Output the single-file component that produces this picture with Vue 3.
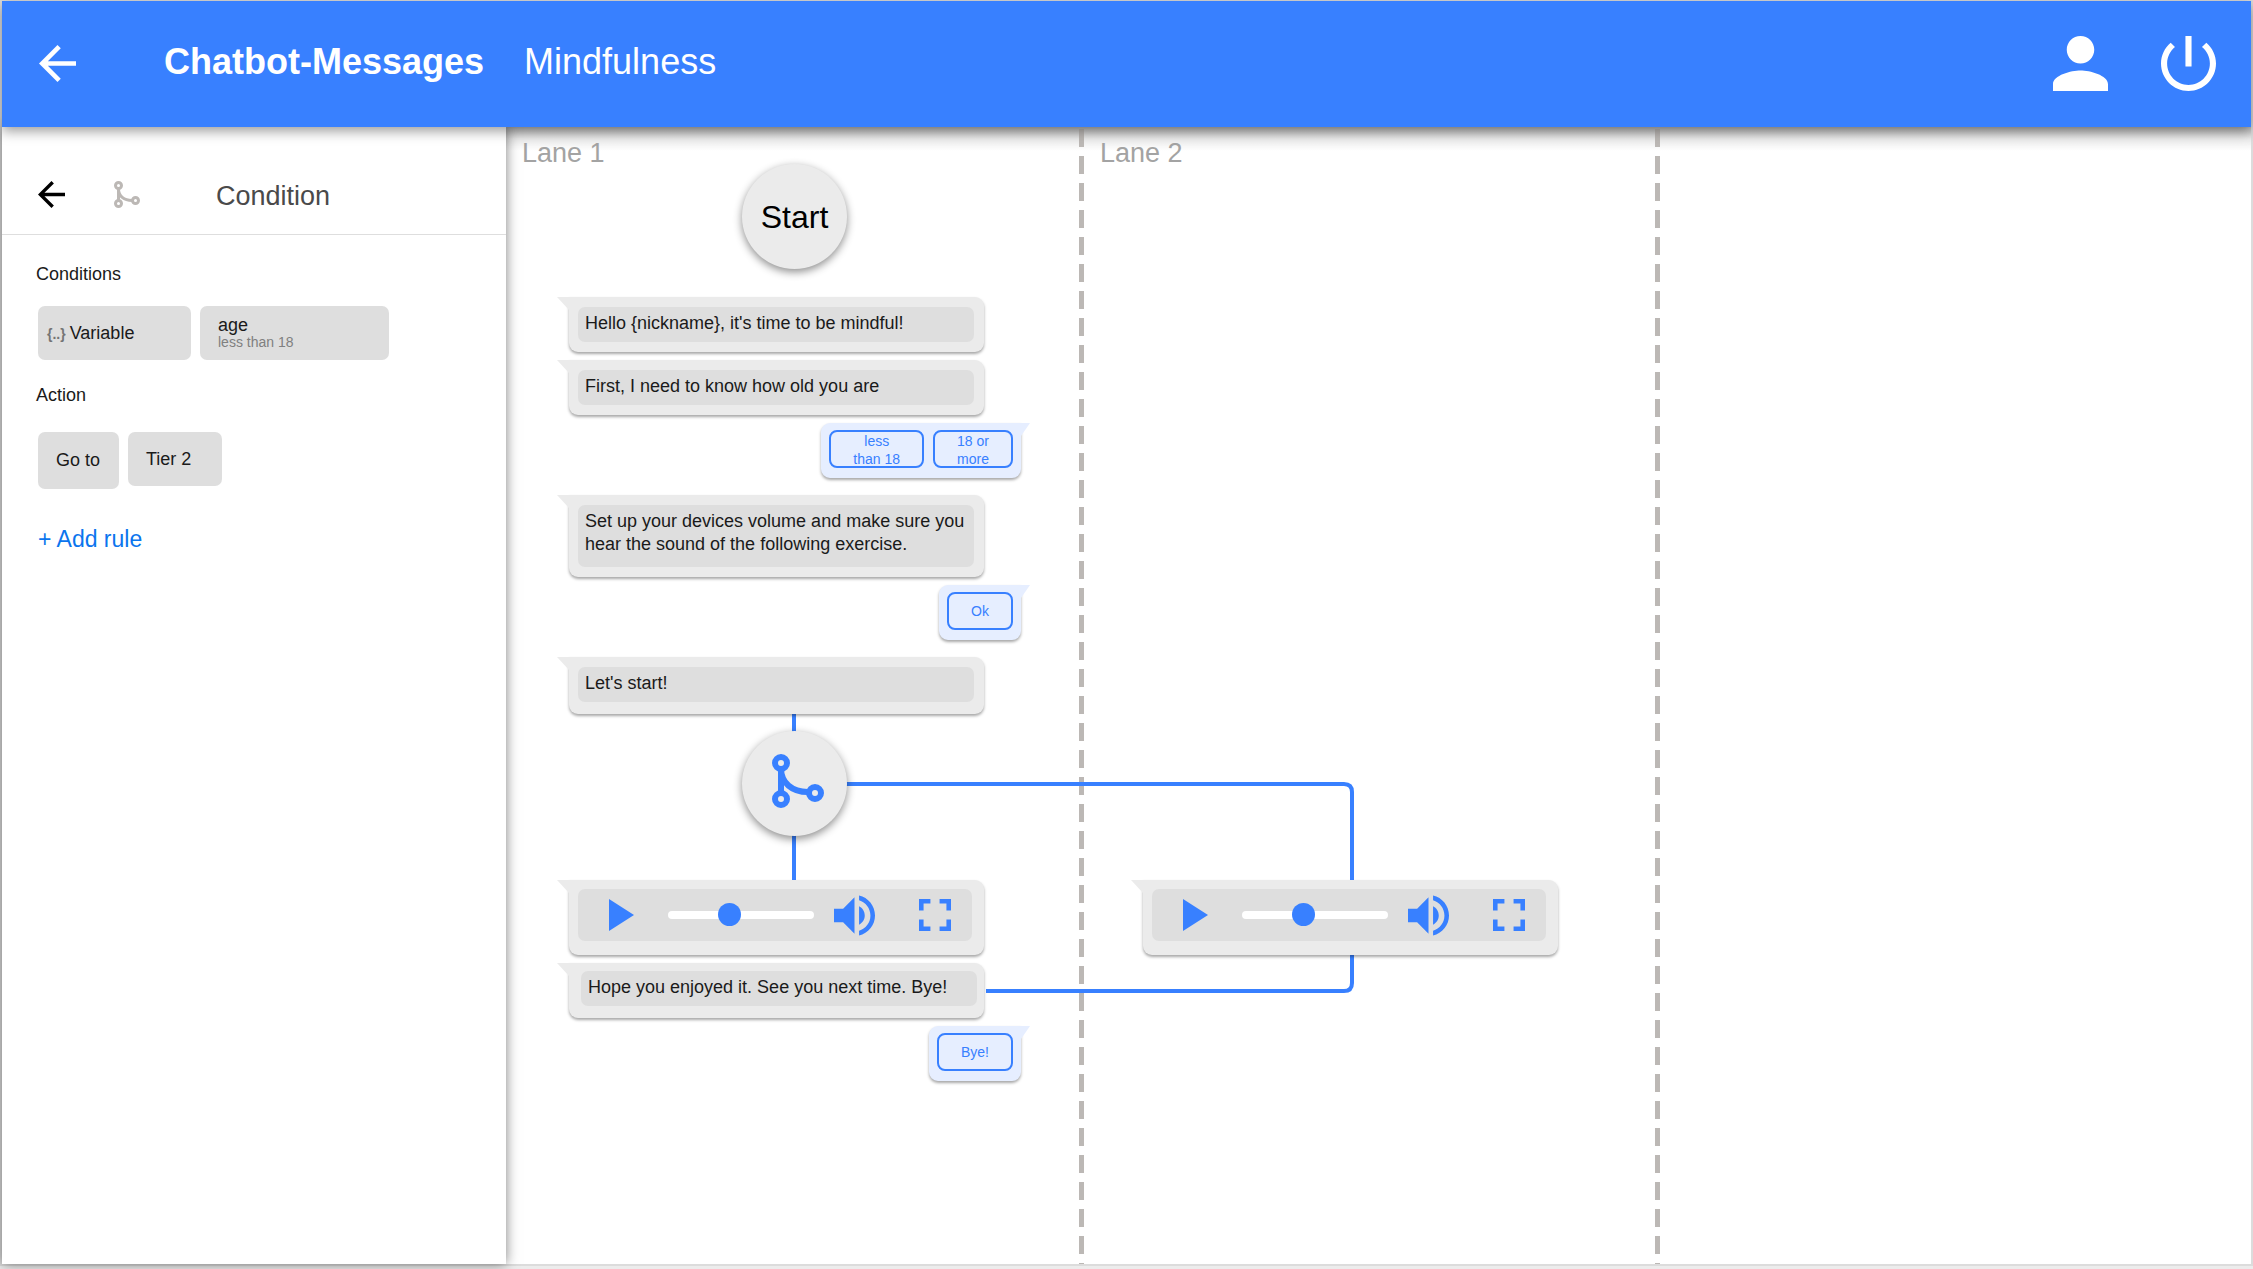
<script setup>
import { ref } from 'vue'

const blocks = [
  { kind: 'start' },
  {
    kind: 'turn',
    items: [
      { from: 'bot', text: "Hello {nickname}, it's time to be mindful!" },
      { from: 'bot', text: 'First, I need to know how old you are' },
      { from: 'user', options: ['less\nthan 18', '18 or\nmore'] },
    ],
  },
  {
    kind: 'turn',
    items: [
      {
        from: 'bot',
        tall: true,
        text: 'Set up your devices volume and make sure you hear the sound of the following exercise.',
      },
      { from: 'user', options: ['Ok'] },
    ],
  },
  { kind: 'turn', items: [{ from: 'bot', joined: true, text: "Let's start!" }] },
  { kind: 'condition' },
  {
    kind: 'turn',
    items: [
      { from: 'audio', id: 'seek-lane-1' },
      { from: 'bot', last: true, text: 'Hope you enjoyed it. See you next time. Bye!' },
      { from: 'user', options: ['Bye!'] },
    ],
  },
]

const secondLane = [
  { kind: 'turn', items: [{ from: 'audio', id: 'seek-lane-2' }] },
]

const lanes = [
  { title: 'Lane 1', cls: 'lane-first', blocks },
  { title: 'Lane 2', cls: 'lane-second', blocks: secondLane },
]

const positions = ref({ 'seek-lane-1': 41, 'seek-lane-2': 41 })
</script>

<template>
  <div class="page">
    <header class="topbar">
      <button class="icon-btn" type="button" aria-label="Back">
        <svg width="37" height="37" viewBox="4 4 16 16"><path fill="currentColor" d="M20 11H7.83l5.59-5.59L12 4l-8 8 8 8 1.41-1.41L7.83 13H20z" /></svg>
      </button>
      <h1 class="product">Chatbot-Messages</h1>
      <span class="project">Mindfulness</span>
      <nav class="actions">
        <button class="icon-btn" type="button" aria-label="Profile">
          <svg width="55" height="55" viewBox="4 4 16 16"><path fill="currentColor" d="M12 12c2.21 0 4-1.79 4-4s-1.79-4-4-4-4 1.79-4 4 1.79 4 4 4zm0 2c-2.67 0-8 1.34-8 4v2h16v-2c0-2.66-5.33-4-8-4z" /></svg>
        </button>
        <button class="icon-btn" type="button" aria-label="Log out">
          <svg width="55" height="55" viewBox="3 3 18 18"><path fill="currentColor" d="M13 3h-2v10h2V3zm4.83 2.17l-1.42 1.42C17.99 7.86 19 9.81 19 12c0 3.87-3.13 7-7 7s-7-3.13-7-7c0-2.19 1.01-4.14 2.58-5.42L6.17 5.17C4.23 6.82 3 9.26 3 12c0 4.97 4.03 9 9 9s9-4.03 9-9c0-2.74-1.23-5.18-3.17-6.83z" /></svg>
        </button>
      </nav>
    </header>

    <div class="workspace">
      <aside class="sidebar">
        <div class="sidebar-head">
          <button class="icon-btn dark" type="button" aria-label="Close condition">
            <svg width="27" height="27" viewBox="4 4 16 16"><path fill="currentColor" d="M20 11H7.83l5.59-5.59L12 4l-8 8 8 8 1.41-1.41L7.83 13H20z" /></svg>
          </button>
          <svg class="branch muted" width="26" height="27" viewBox="0 0 52 54">
            <path d="M9 14V40M9 16C9 30 20 39 36 39" />
            <circle cx="9" cy="9" r="6" /><circle cx="9" cy="45" r="6" /><circle cx="43" cy="39" r="6" />
          </svg>
          <h2>Condition</h2>
        </div>
        <div class="sidebar-body">
          <h3>Conditions</h3>
          <div class="chips">
            <button class="chip variable" type="button"><b>{..}</b>Variable</button>
            <button class="chip rule" type="button"><span>age</span><small>less than 18</small></button>
          </div>
          <h3>Action</h3>
          <div class="chips actions-row">
            <button class="chip goto" type="button">Go to</button>
            <button class="chip tier" type="button">Tier 2</button>
          </div>
          <button class="add" type="button">+ Add rule</button>
        </div>
      </aside>

      <main class="canvas">
        <svg class="wires" width="900" height="900" viewBox="0 0 900 900">
          <path d="M288 587V606M288 707V755" />
          <path d="M339 657H838Q846 657 846 665V755" />
          <path d="M480 864H838Q846 864 846 856V826" />
        </svg>

        <section v-for="lane in lanes" :key="lane.title" class="lane" :class="lane.cls">
          <h2 class="lane-title">{{ lane.title }}</h2>
          <div class="thread">
            <template v-for="(block, b) in lane.blocks" :key="b">
              <div v-if="block.kind === 'start'" class="node start">Start</div>
              <div v-else-if="block.kind === 'condition'" class="node condition">
                <svg class="branch" width="58" height="60" viewBox="-6 0 58 60">
                  <path d="M9 14V40M9 14C9 29 20 38 36 38" />
                  <circle cx="9" cy="9" r="6" /><circle cx="9" cy="45" r="6" /><circle cx="43" cy="39" r="6" />
                </svg>
              </div>
              <div v-else class="turn">
                <template v-for="(item, i) in block.items" :key="i">
                  <div v-if="item.from === 'bot'" class="bubble bot" :class="{ joined: item.joined, last: item.last }">
                    <p class="text" :class="{ tall: item.tall }">{{ item.text }}</p>
                  </div>
                  <div v-else-if="item.from === 'user'" class="bubble user">
                    <button v-for="o in item.options" :key="o" class="option" type="button">{{ o }}</button>
                  </div>
                  <div v-else class="bubble bot audio">
                    <div class="player">
                      <button class="icon-btn blue" type="button" aria-label="Play">
                        <svg width="25" height="32" viewBox="8 5 11 14"><path fill="currentColor" d="M8 5v14l11-7z" /></svg>
                      </button>
                      <input :id="item.id" v-model="positions[item.id]" class="seek" type="range" min="0" max="100" aria-label="Playback position" />
                      <button class="icon-btn blue volume" type="button" aria-label="Volume">
                        <svg width="41" height="41" viewBox="3 3 18 18"><path fill="currentColor" d="M3 9v6h4l5 5V4L7 9H3zm13.5 3c0-1.77-1.02-3.29-2.5-4.03v8.05c1.48-.73 2.5-2.25 2.5-4.02zM14 3.23v2.06c2.89.86 5 3.54 5 6.71s-2.11 5.85-5 6.71v2.06c4.01-.91 7-4.49 7-8.77s-2.99-7.86-7-8.77z" /></svg>
                      </button>
                      <button class="icon-btn blue" type="button" aria-label="Fullscreen">
                        <svg width="32" height="32" viewBox="5 5 14 14"><path fill="currentColor" d="M7 14H5v5h5v-2H7v-3zm-2-4h2V7h3V5H5v5zm12 7h-3v2h5v-5h-2v3zM14 5v2h3v3h2V5h-5z" /></svg>
                      </button>
                    </div>
                  </div>
                </template>
              </div>
            </template>
          </div>
        </section>
      </main>
    </div>
  </div>
</template>

<style>
body {
  background: #ebebeb;
}
</style>

<style scoped>
.page {
  box-sizing: border-box;
  min-height: 100vh;
  padding: 1px 2px 5px;
  display: flex;
  flex-direction: column;
  background: #dcdcdc linear-gradient(#ececec, #ececec) bottom / 100% 3px no-repeat;
  font-family: "Liberation Sans", Arial, sans-serif;
  font-size: 18px;
  color: #1a1a1a;
}

h1, h2, h3, p {
  margin: 0;
  font-weight: 400;
}

button {
  font: inherit;
  color: inherit;
  border: 0;
  background: none;
  padding: 0;
  cursor: pointer;
}

.icon-btn {
  display: flex;
}

.icon-btn.dark {
  color: #000;
}

.icon-btn.blue {
  color: #3880ff;
}

.topbar {
  position: relative;
  z-index: 3;
  box-sizing: border-box;
  display: flex;
  align-items: center;
  height: 126px;
  padding: 0 35px 2px 37px;
  background: #3880ff;
  color: #fff;
  font-size: 36px;
  line-height: 42px;
  box-shadow: 0 4px 12px rgba(0, 0, 0, 0.4);
}

.product {
  margin-left: 88px;
  padding-bottom: 2px;
  font-size: 36px;
  font-weight: 700;
}

.project {
  margin-left: 40px;
  padding-bottom: 2px;
}

.actions {
  display: flex;
  gap: 53px;
  margin-left: auto;
}

.workspace {
  flex: 1;
  display: flex;
  background: #fff;
}

.sidebar {
  position: relative;
  z-index: 2;
  flex: 0 0 504px;
  background: #fff;
  box-shadow: 0 0 12px rgba(0, 0, 0, 0.5);
}

.sidebar-head {
  display: flex;
  align-items: center;
  height: 80px;
  padding: 27px 36px 0;
  border-bottom: 1px solid #dedede;
}

.sidebar-head h2 {
  margin-left: 76px;
  padding-top: 4px;
  font-size: 27px;
  line-height: 30px;
  color: #4a4a4a;
}

.branch {
  fill: none;
  stroke: #3880ff;
  stroke-width: 6;
}

.branch.muted {
  margin-left: 49px;
  stroke: #bcb8b5;
}

.sidebar-body {
  padding: 29px 34px;
}

h3 {
  font-size: 18px;
  line-height: 20px;
}

.chips {
  display: flex;
  align-items: flex-start;
  gap: 9px;
  margin: 22px 2px 25px;
}

.chips.actions-row {
  margin: 27px 2px 37px;
}

.chip {
  box-sizing: border-box;
  height: 54px;
  border-radius: 7px;
  background: #dedede;
  line-height: 22px;
  text-align: left;
  padding: 0 18px;
}

.variable {
  width: 153px;
  padding: 0 9px;
}

.variable b {
  margin-right: 4px;
  font-size: 14px;
  color: #757575;
}

.rule {
  display: flex;
  flex-direction: column;
  width: 189px;
  padding: 9px 18px;
}

.rule span {
  line-height: 20px;
}

.rule small {
  font-size: 14px;
  line-height: 14px;
  color: #808080;
}

.goto {
  width: 81px;
  height: 57px;
  padding-bottom: 2px;
}

.tier {
  width: 94px;
}

.add {
  margin-left: 2px;
  font-size: 23px;
  line-height: 26px;
  color: #0b75ee;
}

.canvas {
  position: relative;
  flex: 1;
  min-width: 0;
  display: flex;
  background: linear-gradient(rgba(0, 0, 0, 0.26), rgba(0, 0, 0, 0.08) 12px, transparent 24px);
}

.wires {
  position: absolute;
  top: 0;
  left: 0;
  fill: none;
  stroke: #3880ff;
  stroke-width: 4;
}

.lane {
  box-sizing: border-box;
  flex: 0 0 auto;
  padding: 16px 16px 0;
  background: linear-gradient(#bcb8b5 18px, transparent 18px) right 2px / 5px 27px repeat-y;
  background-position: right 0 top 2px;
}

.lane-first {
  width: 578px;
}

.lane-second {
  width: 576px;
}

.lane-title {
  font-size: 27px;
  line-height: 21px;
  color: #a3a3a3;
}

.thread {
  position: relative;
  z-index: 1;
  display: flex;
  flex-direction: column;
  gap: 17px;
  width: 452px;
  margin-left: 47px;
}

.lane-second .thread {
  width: 415px;
  margin: 716px 0 0 43px;
}

.node {
  display: flex;
  align-items: center;
  justify-content: center;
  width: 105px;
  height: 105px;
  margin-left: 173px;
  border-radius: 50%;
  background: #ebebeb;
  box-shadow: 0 3px 8px rgba(0, 0, 0, 0.45);
}

.start {
  margin-bottom: 11px;
  font-size: 32px;
  line-height: 36px;
  color: #000;
}

.condition {
  margin-bottom: 27px;
}

.turn {
  display: flex;
  flex-direction: column;
  align-items: flex-start;
  gap: 8px;
}

.bubble {
  position: relative;
  box-sizing: border-box;
  box-shadow: 0 2px 3px rgba(0, 0, 0, 0.35);
}

.bubble::before {
  content: "";
  position: absolute;
  top: 0;
}

.bot {
  width: 415px;
  padding: 10px 10px 10px 9px;
  border-radius: 0 9px 9px 9px;
  background: #ebebeb;
}

.bot::before {
  right: 100%;
  width: 12px;
  height: 13px;
  background: #ebebeb;
  clip-path: polygon(0 0, 100% 0, 100% 100%);
}

.joined {
  padding-bottom: 12px;
}

.last {
  padding: 8px 7px 12px 12px;
}

.text {
  padding: 5px 7px 7px;
  border-radius: 7px;
  background: #dedede;
  line-height: 23px;
}

.text.tall {
  padding-bottom: 11px;
}

.user {
  align-self: flex-end;
  display: flex;
  gap: 9px;
  padding: 7px 8px 10px;
  border-radius: 9px 0 9px 9px;
  background: #e6eeff;
}

.user::before {
  left: 100%;
  width: 9px;
  height: 13px;
  background: #e6eeff;
  clip-path: polygon(0 0, 100% 0, 0 100%);
}

.option {
  box-sizing: border-box;
  height: 38px;
  padding: 0 22px;
  border: 2px solid #3880ff;
  border-radius: 8px;
  font-size: 14px;
  line-height: 18px;
  color: #3880ff;
  white-space: pre-line;
}

.audio {
  padding: 9px 12px 14px 9px;
}

.player {
  box-sizing: border-box;
  display: flex;
  align-items: center;
  height: 52px;
  padding: 0 21px 0 31px;
  border-radius: 7px;
  background: #dedede;
}

.volume {
  margin: 0 44px 0 20px;
}

.seek {
  appearance: none;
  flex: 1;
  min-width: 0;
  height: 23px;
  margin: 0 0 0 34px;
  background: transparent;
}

.seek::-webkit-slider-runnable-track {
  height: 8px;
  border-radius: 4px;
  background: #fff;
}

.seek::-webkit-slider-thumb {
  appearance: none;
  width: 23px;
  height: 23px;
  margin-top: -8px;
  border-radius: 50%;
  background: #3880ff;
}
</style>
